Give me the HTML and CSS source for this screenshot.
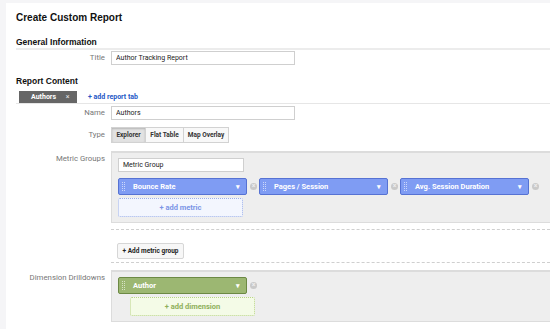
FILE: index.html
```html
<!DOCTYPE html>
<html lang="en">
<head>
  <meta charset="UTF-8" />
  <title>Create Custom Report</title>
  <link rel="stylesheet" href="styles.css">
</head>
<body>
  <div class="page">
    <h1>Create Custom Report</h1>

    <h2 class="section-head">General Information</h2>
    <div class="row">
      <label class="label">Title</label>
      <div class="field"><input class="text-input wide" value="Author Tracking Report"></div>
    </div>

    <h2 class="report-head">Report Content</h2>
    <div class="tab-bar">
      <span class="tab">Authors <span class="tab-close">&times;</span></span>
      <a class="add-tab" href="#">+ add report tab</a>
    </div>

    <div class="row name-row">
      <label class="label">Name</label>
      <div class="field"><input class="text-input wide" value="Authors"></div>
    </div>

    <div class="row type-row">
      <label class="label">Type</label>
      <div class="field">
        <div class="btn-group">
          <button class="seg active">Explorer</button>
          <button class="seg">Flat Table</button>
          <button class="seg">Map Overlay</button>
        </div>
      </div>
    </div>

    <div class="row group-row">
      <label class="label pad">Metric Groups</label>
      <div class="field">
        <div class="box">
          <input class="text-input group-name" value="Metric Group">
          <div class="chips">
            <div class="chip-wrap">
              <div class="chip blue"><span class="grip"></span>Bounce Rate<span class="caret">&#9662;</span></div>
              <span class="remove">&times;</span>
            </div>
            <div class="chip-wrap">
              <div class="chip blue"><span class="grip"></span>Pages / Session<span class="caret">&#9662;</span></div>
              <span class="remove">&times;</span>
            </div>
            <div class="chip-wrap">
              <div class="chip blue"><span class="grip"></span>Avg. Session Duration<span class="caret">&#9662;</span></div>
              <span class="remove">&times;</span>
            </div>
          </div>
          <div class="add-slot metric">+ add metric</div>
        </div>
        <div class="group-slot">
          <button class="plain-btn">+ Add metric group</button>
        </div>
      </div>
    </div>

    <div class="row dim-row">
      <label class="label pad">Dimension Drilldowns</label>
      <div class="field">
        <div class="box">
          <div class="chips">
            <div class="chip-wrap">
              <div class="chip green"><span class="grip"></span>Author<span class="caret">&#9662;</span></div>
              <span class="remove">&times;</span>
            </div>
          </div>
          <div class="add-slot dimension">+ add dimension</div>
        </div>
      </div>
    </div>
  </div>
</body>
</html>
```

FILE: styles.css
```css
html, body {
  margin: 0;
  overflow: hidden;
}

body {
  background: #f5f5f7;
  font-family: Roboto, 'Liberation Sans', Arial, sans-serif;
  color: #222;
  height: 100vh;
}

.page {
  margin: 3px 0 0 6px;
  background: #fff;
  padding: 8px 0 0 10px;
  height: calc(100vh - 3px);
  box-sizing: border-box;
}

h1 {
  font-family: 'Liberation Sans', Arial, sans-serif;
  font-size: 10px;
  line-height: 14px;
  margin: 0;
  color: #111;
}

h2 {
  font-family: 'Liberation Sans', Arial, sans-serif;
  font-size: 8.5px;
  line-height: 11px;
  margin: 0;
  color: #111;
}

.section-head {
  margin-top: 12px;
  border-bottom: 2px solid #ececec;
}

.report-head {
  margin-top: 11px;
}

.row {
  display: flex;
  gap: 6px;
  margin-top: 1px;
}

.label {
  width: 89px;
  flex: none;
  text-align: right;
  font-size: 7.8px;
  color: #777;
  line-height: 14px;
}

.label.pad {
  padding-top: 1px;
}

.field {
  flex: 1;
  min-width: 0;
}

.text-input {
  display: block;
  box-sizing: border-box;
  height: 14px;
  border: 1px solid #cfcfcf;
  padding: 0 4px;
  font-family: Roboto, 'Liberation Sans', Arial, sans-serif;
  font-size: 7px;
  color: #222;
  background: #fff;
  outline: none;
}

.wide {
  width: 184px;
}

.tab-bar {
  display: flex;
  align-items: center;
  margin-top: 4px;
  border-bottom: 1px solid #e6e6e6;
  height: 12px;
}

.tab {
  margin-left: 3px;
  width: 58px;
  height: 12px;
  box-sizing: border-box;
  background: #666;
  color: #fff;
  font-size: 7px;
  font-weight: bold;
  line-height: 12px;
  padding-left: 12px;
}

.tab-close {
  font-weight: normal;
  margin-left: 8px;
  color: #e4e4e4;
}

.add-tab {
  margin-left: 11px;
  color: #2458c6;
  font-size: 7px;
  font-weight: bold;
  text-decoration: none;
}

.name-row {
  margin-top: 2px;
}

.type-row {
  margin-top: 7px;
}

.type-row .label {
  line-height: 15px;
}

.btn-group {
  display: flex;
  width: 118px;
}

.seg {
  height: 16px;
  border: 1px solid #d2d2d2;
  background: #f8f8f8;
  font-family: Roboto, 'Liberation Sans', Arial, sans-serif;
  font-size: 6.5px;
  font-weight: bold;
  color: #333;
  padding: 0;
  margin-left: -1px;
  flex: none;
}

.seg:first-child {
  margin-left: 0;
  width: 35px;
}

.seg:nth-child(2) {
  width: 39px;
}

.seg:nth-child(3) {
  width: 46px;
}

.seg.active {
  background: #e2e2e2;
  box-shadow: inset 0 1px 2px rgba(0, 0, 0, 0.2);
}

.group-row {
  margin-top: 8px;
}

.box {
  background: #eeeeee;
  border: 1px solid #dcdcdc;
  border-top-width: 2px;
  border-right: 0;
  padding: 5px 0 5px 6px;
}

.group-name {
  width: 126px;
}

.chips {
  display: flex;
  gap: 2px;
  margin-top: 6px;
}

.dim-row .chips {
  margin-top: 0;
}

.chip-wrap {
  display: flex;
  align-items: center;
  gap: 3px;
}

.chip {
  width: 129px;
  height: 17px;
  box-sizing: border-box;
  border: 1px solid;
  border-radius: 2px;
  display: flex;
  align-items: center;
  color: #fff;
  font-size: 7.5px;
  font-weight: bold;
  padding: 0 6px 0 3px;
}

.chip.blue {
  background: #7f9cf3;
  border-color: #5672d3;
}

.chip.green {
  background: #9cb772;
  border-color: #6c8944;
}

.grip {
  width: 1px;
  height: 9px;
  margin-right: 8px;
  border-left: 1px dotted rgba(255, 255, 255, 0.6);
  border-right: 1px dotted rgba(255, 255, 255, 0.6);
}

.caret {
  margin-left: auto;
  font-size: 7px;
}

.remove {
  width: 7px;
  height: 7px;
  border-radius: 50%;
  background: #c9c9c9;
  color: #eee;
  font-size: 7px;
  line-height: 7px;
  text-align: center;
  font-weight: bold;
}

.add-slot {
  box-sizing: border-box;
  height: 19px;
  width: 125px;
  margin-top: 3px;
  border: 1px dotted;
  border-radius: 2px;
  font-size: 7.5px;
  font-weight: bold;
  text-align: center;
  line-height: 17px;
}

.add-slot.metric {
  background: #f3f6fe;
  border-color: #9db0e8;
  color: #7b95e6;
}

.add-slot.dimension {
  margin-left: 12px;
  background: #f4fbe7;
  border-color: #b9d389;
  color: #8eaf5a;
}

.group-slot {
  margin-top: 6px;
  height: 34px;
  box-sizing: border-box;
  border-top: 1px dashed #cfcfcf;
  border-bottom: 1px dashed #cfcfcf;
  padding: 8px 6px;
}

.plain-btn {
  height: 16px;
  width: 67px;
  border: 1px solid #d6d6d6;
  border-radius: 2px;
  background: #f7f7f7;
  font-family: Roboto, 'Liberation Sans', Arial, sans-serif;
  font-size: 6.5px;
  font-weight: bold;
  color: #222;
  padding: 0;
}

.dim-row {
  margin-top: 7px;
}
```
